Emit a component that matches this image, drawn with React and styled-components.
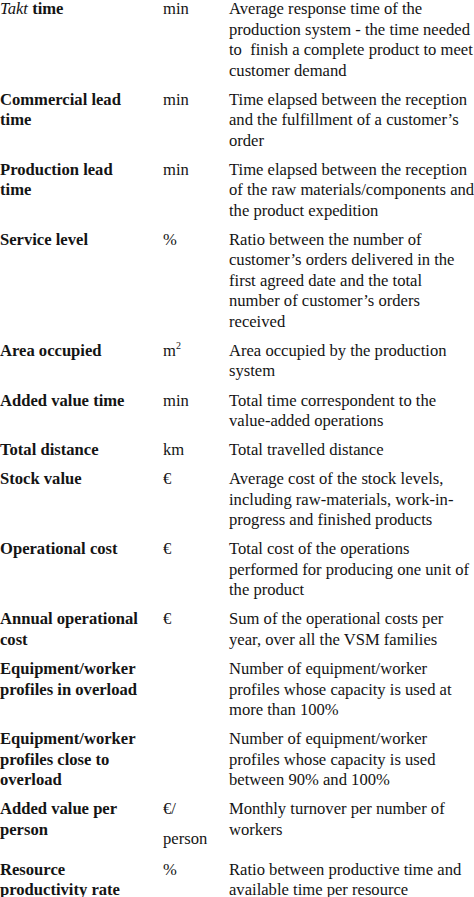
import React from "react";
import styled, { createGlobalStyle } from "styled-components";

const GlobalStyle = createGlobalStyle`
  html, body {
    margin: 0;
    padding: 0;
    background: #ffffff;
  }
  body {
    font-family: "Liberation Serif", "Times New Roman", serif;
    color: #141414;
    overflow: hidden;
  }
`;

const Table = styled.div`
  display: grid;
  grid-template-columns: 163px 66px 1fr;
  row-gap: 8.62px;
  width: 474px;
  margin-top: -1px;
  font-size: 16.6px;
  line-height: 20.5px;
`;

const Name = styled.div`
  font-weight: bold;
  white-space: nowrap;
`;

const Italic = styled.span`
  font-style: italic;
  font-weight: normal;
`;

const Unit = styled.div`
  white-space: nowrap;
  display: flex;
  flex-direction: column;
  gap: 9.5px;
  padding-bottom: ${(props) => (props.$stacked ? 1.5 : 0)}px;
`;

const Desc = styled.div`
  white-space: nowrap;
`;

const Line = styled.div``;

const Sup = styled.sup`
  font-size: 10px;
  line-height: 0;
  vertical-align: 7px;
`;

const rows = [
  {
    name: [
      <>
        <Italic>Takt</Italic> time
      </>,
    ],
    unit: ["min"],
    desc: [
      "Average response time of the",
      "production system - the time needed",
      "to \u00a0finish a complete product to meet",
      "customer demand",
    ],
  },
  {
    name: ["Commercial lead", "time"],
    unit: ["min"],
    desc: [
      "Time elapsed between the reception",
      "and the fulfillment of a customer\u2019s",
      "order",
    ],
  },
  {
    name: ["Production lead", "time"],
    unit: ["min"],
    desc: [
      "Time elapsed between the reception",
      "of the raw materials/components and",
      "the product expedition",
    ],
  },
  {
    name: ["Service level"],
    unit: ["%"],
    desc: [
      "Ratio between the number of",
      "customer\u2019s orders delivered in the",
      "first agreed date and the total",
      "number of customer\u2019s orders",
      "received",
    ],
  },
  {
    name: ["Area occupied"],
    unit: [
      <>
        m<Sup>2</Sup>
      </>,
    ],
    desc: ["Area occupied by the production", "system"],
  },
  {
    name: ["Added value time"],
    unit: ["min"],
    desc: ["Total time correspondent to the", "value-added operations"],
  },
  {
    name: ["Total distance"],
    unit: ["km"],
    desc: ["Total travelled distance"],
  },
  {
    name: ["Stock value"],
    unit: ["\u20ac"],
    desc: [
      "Average cost of the stock levels,",
      "including raw-materials, work-in-",
      "progress and finished products",
    ],
  },
  {
    name: ["Operational cost"],
    unit: ["\u20ac"],
    desc: [
      "Total cost of the operations",
      "performed for producing one unit of",
      "the product",
    ],
  },
  {
    name: ["Annual operational", "cost"],
    unit: ["\u20ac"],
    desc: ["Sum of the operational costs per", "year, over all the VSM families"],
  },
  {
    name: ["Equipment/worker", "profiles in overload"],
    unit: [],
    desc: [
      "Number of equipment/worker",
      "profiles whose capacity is used at",
      "more than 100%",
    ],
  },
  {
    name: ["Equipment/worker", "profiles close to", "overload"],
    unit: [],
    desc: [
      "Number of equipment/worker",
      "profiles whose capacity is used",
      "between 90% and 100%",
    ],
  },
  {
    name: ["Added value per", "person"],
    unit: ["\u20ac/", "person"],
    desc: ["Monthly turnover per number of", "workers"],
  },
  {
    name: ["Resource", "productivity rate"],
    unit: ["%"],
    desc: ["Ratio between productive time and", "available time per resource"],
  },
];

const App = () => {
  return (
    <>
      <GlobalStyle />
      <Table>
        {rows.map((row, i) => (
          <React.Fragment key={i}>
            <Name>
              {row.name.map((l, j) => (
                <Line key={j}>{l}</Line>
              ))}
            </Name>
            <Unit $stacked={row.unit.length > 1}>
              {row.unit.map((u, j) => (
                <Line key={j}>{u}</Line>
              ))}
            </Unit>
            <Desc>
              {row.desc.map((l, j) => (
                <Line key={j}>{l}</Line>
              ))}
            </Desc>
          </React.Fragment>
        ))}
      </Table>
    </>
  );
};

export default App;
